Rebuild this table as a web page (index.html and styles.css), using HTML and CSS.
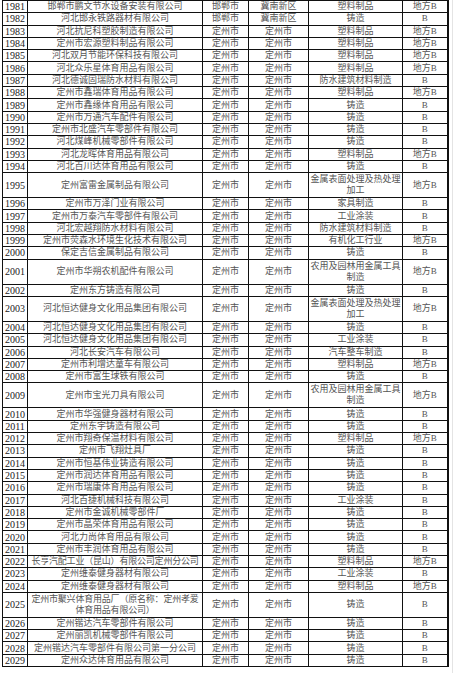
FILE: index.html
```html
<!DOCTYPE html>
<html lang="zh">
<head>
<meta charset="utf-8">
<title>名单</title>
<link rel="stylesheet" href="styles.css">
</head>
<body>
<div class="page">
<table class="list">
<colgroup><col class="c1"><col class="c2"><col class="c3"><col class="c4"><col class="c5"><col class="c6"></colgroup>
<tbody>
<tr><td class="n">1981</td><td>邯郸市鹏文节水设备安装有限公司</td><td>邯郸市</td><td>冀南新区</td><td>塑料制品</td><td>地方B</td></tr>
<tr><td class="n">1982</td><td>河北邯永铁路器材有限公司</td><td>邯郸市</td><td>冀南新区</td><td>铸造</td><td>B</td></tr>
<tr><td class="n">1983</td><td>河北抗尼科塑胶制造有限公司</td><td>定州市</td><td>定州市</td><td>塑料制品</td><td>地方B</td></tr>
<tr><td class="n">1984</td><td>定州市宏源塑料制品有限公司</td><td>定州市</td><td>定州市</td><td>塑料制品</td><td>地方B</td></tr>
<tr><td class="n">1985</td><td>河北双月节能环保科技有限公司</td><td>定州市</td><td>定州市</td><td>塑料制品</td><td>地方B</td></tr>
<tr><td class="n">1986</td><td>河北众乐星体育用品有限公司</td><td>定州市</td><td>定州市</td><td>塑料制品</td><td>地方B</td></tr>
<tr><td class="n">1987</td><td>河北德诚固瑞防水材料有限公司</td><td>定州市</td><td>定州市</td><td>防水建筑材料制造</td><td>B</td></tr>
<tr><td class="n">1988</td><td>定州市鑫瑞体育用品有限公司</td><td>定州市</td><td>定州市</td><td>塑料制品</td><td>地方B</td></tr>
<tr><td class="n">1989</td><td>定州市鑫缘体育用品有限公司</td><td>定州市</td><td>定州市</td><td>铸造</td><td>B</td></tr>
<tr><td class="n">1990</td><td>定州市万通汽车配件有限公司</td><td>定州市</td><td>定州市</td><td>铸造</td><td>B</td></tr>
<tr><td class="n">1991</td><td>定州市北盛汽车零部件有限公司</td><td>定州市</td><td>定州市</td><td>铸造</td><td>B</td></tr>
<tr><td class="n">1992</td><td>河北煤峰机械零部件有限公司</td><td>定州市</td><td>定州市</td><td>铸造</td><td>B</td></tr>
<tr><td class="n">1993</td><td>河北龙晖体育用品有限公司</td><td>定州市</td><td>定州市</td><td>塑料制品</td><td>地方B</td></tr>
<tr><td class="n">1994</td><td>河北百川达体育用品有限公司</td><td>定州市</td><td>定州市</td><td>铸造</td><td>B</td></tr>
<tr class="d"><td class="n">1995</td><td>定州富雷金属制品有限公司</td><td>定州市</td><td>定州市</td><td>金属表面处理及热处理<br>加工</td><td>地方B</td></tr>
<tr><td class="n">1996</td><td>定州市万泽门业有限公司</td><td>定州市</td><td>定州市</td><td>家具制造</td><td>B</td></tr>
<tr><td class="n">1997</td><td>定州市万泰汽车零部件有限公司</td><td>定州市</td><td>定州市</td><td>工业涂装</td><td>B</td></tr>
<tr><td class="n">1998</td><td>河北宏越翔防水材料有限公司</td><td>定州市</td><td>定州市</td><td>防水建筑材料制造</td><td>B</td></tr>
<tr><td class="n">1999</td><td>定州市荧森水环境生化技术有限公司</td><td>定州市</td><td>定州市</td><td>有机化工行业</td><td>地方B</td></tr>
<tr><td class="n">2000</td><td>保定吉信金属制品有限公司</td><td>定州市</td><td>定州市</td><td>铸造</td><td>B</td></tr>
<tr class="d"><td class="n">2001</td><td>定州市华朔农机配件有限公司</td><td>定州市</td><td>定州市</td><td>农用及园林用金属工具<br>制造</td><td>地方B</td></tr>
<tr><td class="n">2002</td><td>定州东方铸造有限公司</td><td>定州市</td><td>定州市</td><td>铸造</td><td>B</td></tr>
<tr class="d"><td class="n">2003</td><td>河北恒达健身文化用品集团有限公司</td><td>定州市</td><td>定州市</td><td>金属表面处理及热处理<br>加工</td><td>地方B</td></tr>
<tr><td class="n">2004</td><td>河北恒达健身文化用品集团有限公司</td><td>定州市</td><td>定州市</td><td>铸造</td><td>B</td></tr>
<tr><td class="n">2005</td><td>河北恒达健身文化用品集团有限公司</td><td>定州市</td><td>定州市</td><td>工业涂装</td><td>B</td></tr>
<tr><td class="n">2006</td><td>河北长安汽车有限公司</td><td>定州市</td><td>定州市</td><td>汽车整车制造</td><td>B</td></tr>
<tr><td class="n">2007</td><td>定州市利增达童车有限公司</td><td>定州市</td><td>定州市</td><td>塑料制品</td><td>地方B</td></tr>
<tr><td class="n">2008</td><td>定州市富生球铁有限公司</td><td>定州市</td><td>定州市</td><td>铸造</td><td>B</td></tr>
<tr class="d"><td class="n">2009</td><td>定州市宝光刀具有限公司</td><td>定州市</td><td>定州市</td><td>农用及园林用金属工具<br>制造</td><td>地方B</td></tr>
<tr><td class="n">2010</td><td>定州市华强健身器材有限公司</td><td>定州市</td><td>定州市</td><td>铸造</td><td>B</td></tr>
<tr><td class="n">2011</td><td>定州东宇铸造有限公司</td><td>定州市</td><td>定州市</td><td>铸造</td><td>B</td></tr>
<tr><td class="n">2012</td><td>定州市翔奇保温材料有限公司</td><td>定州市</td><td>定州市</td><td>塑料制品</td><td>地方B</td></tr>
<tr><td class="n">2013</td><td>定州市飞翔灶具厂</td><td>定州市</td><td>定州市</td><td>铸造</td><td>B</td></tr>
<tr><td class="n">2014</td><td>定州市恒基伟业铸造有限公司</td><td>定州市</td><td>定州市</td><td>铸造</td><td>B</td></tr>
<tr><td class="n">2015</td><td>定州市润达体育用品有限公司</td><td>定州市</td><td>定州市</td><td>铸造</td><td>B</td></tr>
<tr><td class="n">2016</td><td>定州市瑞康体育用品有限公司</td><td>定州市</td><td>定州市</td><td>铸造</td><td>B</td></tr>
<tr><td class="n">2017</td><td>河北百捷机械科技有限公司</td><td>定州市</td><td>定州市</td><td>工业涂装</td><td>B</td></tr>
<tr><td class="n">2018</td><td>定州市金诚机械零部件厂</td><td>定州市</td><td>定州市</td><td>铸造</td><td>B</td></tr>
<tr><td class="n">2019</td><td>定州市晶荣体育用品有限公司</td><td>定州市</td><td>定州市</td><td>铸造</td><td>B</td></tr>
<tr><td class="n">2020</td><td>河北力尚体育用品有限公司</td><td>定州市</td><td>定州市</td><td>铸造</td><td>B</td></tr>
<tr><td class="n">2021</td><td>定州市丰润体育用品有限公司</td><td>定州市</td><td>定州市</td><td>铸造</td><td>B</td></tr>
<tr><td class="n">2022</td><td class="tight">长亨汽配工业（昆山）有限公司定州分公司</td><td>定州市</td><td>定州市</td><td>塑料制品</td><td>地方B</td></tr>
<tr><td class="n">2023</td><td>定州维泰健身器材有限公司</td><td>定州市</td><td>定州市</td><td>工业涂装</td><td>B</td></tr>
<tr><td class="n">2024</td><td>定州维泰健身器材有限公司</td><td>定州市</td><td>定州市</td><td>塑料制品</td><td>地方B</td></tr>
<tr class="d"><td class="n">2025</td><td class="tight">定州市聚兴体育用品厂（原名称：定州孝爱<br>体育用品有限公司）</td><td>定州市</td><td>定州市</td><td>铸造</td><td>B</td></tr>
<tr><td class="n">2026</td><td>定州锴达汽车零部件有限公司</td><td>定州市</td><td>定州市</td><td>铸造</td><td>B</td></tr>
<tr><td class="n">2027</td><td>定州丽凯机械零部件有限公司</td><td>定州市</td><td>定州市</td><td>铸造</td><td>B</td></tr>
<tr><td class="n">2028</td><td>定州锴达汽车零部件有限公司第一分公司</td><td>定州市</td><td>定州市</td><td>铸造</td><td>B</td></tr>
<tr><td class="n">2029</td><td>定州众达体育用品有限公司</td><td>定州市</td><td>定州市</td><td>铸造</td><td>B</td></tr>
</tbody>
</table>
</div>
</body>
</html>
```
FILE: styles.css
```css
html, body {
  margin: 0;
  padding: 0;
  background: #fff;
}
.page {
  padding: 0 0 0 2px;
  width: 453px;
  border-right: 1px solid #e4e4e4;
  min-height: 673px;
  box-sizing: border-box;
}
.list {
  border-collapse: collapse;
  table-layout: fixed;
  width: 445px;
  font-family: "Liberation Serif", "Noto Sans CJK SC", serif;
  font-size: 9px;
  line-height: 11px;
  color: #555;
  border-right: 2px solid #111;
}
.c1 { width: 25px; }
.c2 { width: 175px; }
.c3 { width: 46px; }
.c4 { width: 60px; }
.c5 { width: 94px; }
.c6 { width: 45px; }
.list tr { height: 12.3px; }
.list tr.d { height: 25px; }
.list td {
  border: 1px solid #111;
  padding: 0;
  text-align: center;
  vertical-align: middle;
  white-space: nowrap;
  overflow: hidden;
}
.list td.n {
  font-size: 10px;
  color: #222;
}
.list td.tight {
  letter-spacing: -0.2px;
}
```
